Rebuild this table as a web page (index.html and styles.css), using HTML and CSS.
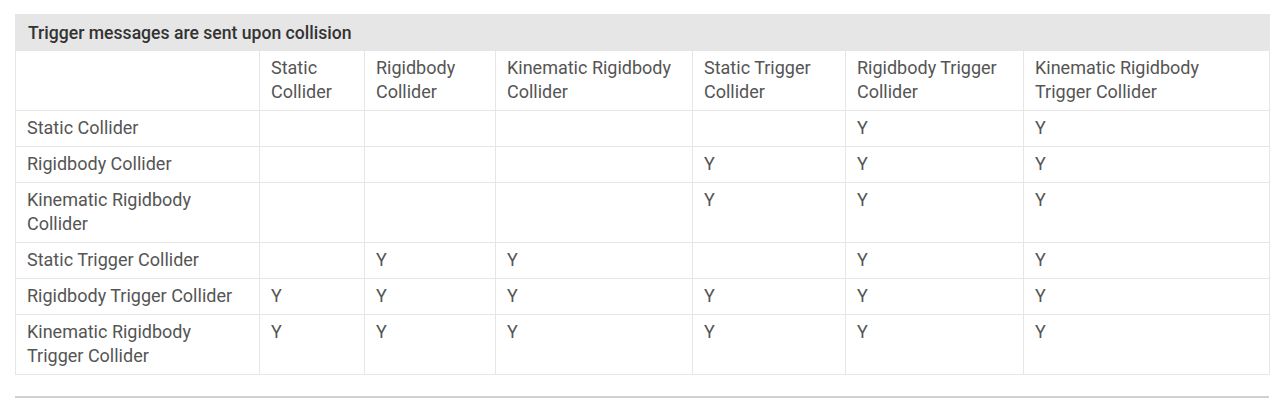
FILE: index.html
```html
<!DOCTYPE html>
<html>
<head>
<meta charset="utf-8">
<link rel="stylesheet" href="styles.css">
</head>
<body>
<div class="page">
<table class="matrix">
  <colgroup>
    <col class="c0"><col class="c1"><col class="c2"><col class="c3"><col class="c4"><col class="c5"><col class="c6">
  </colgroup>
  <thead>
    <tr class="title-row"><th colspan="7" class="title">Trigger messages are sent upon collision</th></tr>
    <tr>
      <th></th>
      <th>Static<br>Collider</th>
      <th>Rigidbody<br>Collider</th>
      <th>Kinematic Rigidbody<br>Collider</th>
      <th>Static Trigger<br>Collider</th>
      <th>Rigidbody Trigger<br>Collider</th>
      <th>Kinematic Rigidbody<br>Trigger Collider</th>
    </tr>
  </thead>
  <tbody>
    <tr><td>Static Collider</td><td></td><td></td><td></td><td></td><td>Y</td><td>Y</td></tr>
    <tr><td>Rigidbody Collider</td><td></td><td></td><td></td><td>Y</td><td>Y</td><td>Y</td></tr>
    <tr><td>Kinematic Rigidbody<br>Collider</td><td></td><td></td><td></td><td>Y</td><td>Y</td><td>Y</td></tr>
    <tr><td>Static Trigger Collider</td><td></td><td>Y</td><td>Y</td><td></td><td>Y</td><td>Y</td></tr>
    <tr><td>Rigidbody Trigger Collider</td><td>Y</td><td>Y</td><td>Y</td><td>Y</td><td>Y</td><td>Y</td></tr>
    <tr><td>Kinematic Rigidbody<br>Trigger Collider</td><td>Y</td><td>Y</td><td>Y</td><td>Y</td><td>Y</td><td>Y</td></tr>
  </tbody>
</table>
<div class="rule"></div>
</div>
</body>
</html>
```

FILE: styles.css
```css
html, body {
  margin: 0;
  padding: 0;
  background: #ffffff;
}
.page {
  padding: 14px 11px 0 15px;
  font-family: Roboto, "Liberation Sans", sans-serif;
  font-size: 18px;
  color: #555555;
}
.matrix {
  width: 1254px;
  border-collapse: collapse;
  table-layout: fixed;
}
.c0 { width: 244px; }
.c1 { width: 105px; }
.c2 { width: 131px; }
.c3 { width: 197px; }
.c4 { width: 153px; }
.c5 { width: 178px; }
.c6 { width: 246px; }
.matrix th,
.matrix td {
  border: 1px solid #e6e6e6;
  padding: 5px 11px 6px 11px;
  line-height: 24px;
  text-align: left;
  vertical-align: top;
  font-weight: 400;
}
.matrix th.title {
  background: #e6e6e6;
  color: #333333;
  font-size: 17.6px;
  font-weight: 500;
  padding: 6px 12px 5px 12px;
  border-color: #e6e6e6;
}
.rule {
  margin-top: 21px;
  width: 1254px;
  height: 2px;
  background: #d0d0d0;
}
```
